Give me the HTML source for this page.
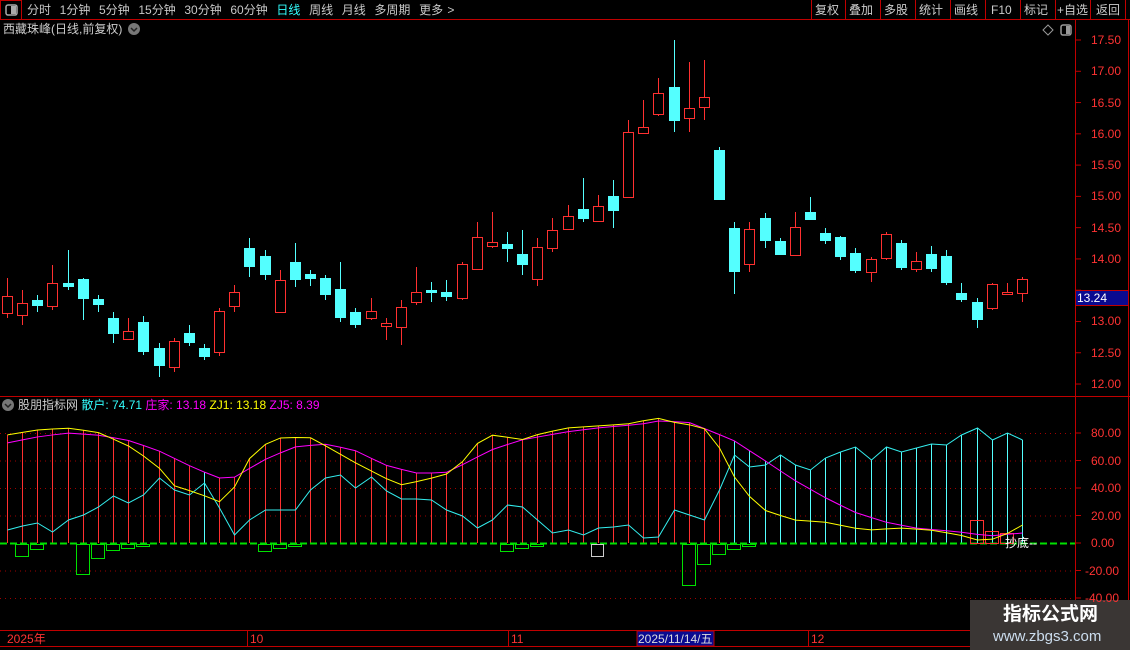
<!DOCTYPE html>
<html><head><meta charset="utf-8">
<style>
html,body{margin:0;padding:0;background:#000;}
body{width:1130px;height:650px;position:relative;overflow:hidden;font-family:"Liberation Sans","Noto Sans CJK SC",sans-serif;}
.t{position:absolute;font-size:12px;white-space:nowrap;line-height:14px;}
svg{position:absolute;left:0;top:0;}
</style></head><body>
<svg id="s" width="1130" height="650" xmlns="http://www.w3.org/2000/svg">
<g fill="none" stroke="#c00000" stroke-width="1">
<line x1="0" y1="19.5" x2="1130" y2="19.5"/>
<rect x="0.5" y="0.5" width="21" height="19"/>
<line x1="1075.5" y1="20" x2="1075.5" y2="630"/>
<line x1="1128.5" y1="20" x2="1128.5" y2="650"/>
<line x1="0" y1="396.5" x2="1130" y2="396.5"/>
<line x1="0" y1="630.5" x2="1075" y2="630.5"/>
<line x1="0" y1="646.5" x2="1130" y2="646.5"/>
<line x1="1075" y1="600.5" x2="1130" y2="600.5"/>
<line x1="247.5" y1="630" x2="247.5" y2="646"/>
<line x1="508.5" y1="630" x2="508.5" y2="646"/>
<line x1="808.5" y1="630" x2="808.5" y2="646"/>
<line x1="811.5" y1="0" x2="811.5" y2="19"/><line x1="845.5" y1="0" x2="845.5" y2="19"/><line x1="880.5" y1="0" x2="880.5" y2="19"/><line x1="915.5" y1="0" x2="915.5" y2="19"/><line x1="950.5" y1="0" x2="950.5" y2="19"/><line x1="985.5" y1="0" x2="985.5" y2="19"/><line x1="1020.5" y1="0" x2="1020.5" y2="19"/><line x1="1055.5" y1="0" x2="1055.5" y2="19"/><line x1="1090.5" y1="0" x2="1090.5" y2="19"/><line x1="1125.5" y1="0" x2="1125.5" y2="19"/>
</g>
<rect x="6" y="5" width="11" height="10" rx="2" fill="none" stroke="#aaa" stroke-width="1.5"/><rect x="11" y="6" width="5" height="8" fill="#aaa"/>
<rect x="1061" y="25" width="10" height="10" rx="2" fill="none" stroke="#999" stroke-width="1.5"/><rect x="1066" y="26" width="4" height="8" fill="#999"/>
<path d="M1048 25 L1053 30 L1048 35 L1043 30 Z" fill="none" stroke="#999"/>
<circle cx="134" cy="29" r="6" fill="#777"/><path d="M131 28 L134 31 L137 28" stroke="#222" stroke-width="1.5" fill="none"/>
<circle cx="8" cy="405" r="6" fill="#777"/><path d="M5 404 L8 407 L11 404" stroke="#222" stroke-width="1.5" fill="none"/>
<g id="grid"></g><g id="ind"></g><g id="cand"></g>
<rect x="637" y="631" width="77" height="15" fill="#0a0a90" stroke="#c00000"/>
<rect x="1075.5" y="290.5" width="53" height="15" fill="#0a0a90" stroke="#c00000"/>
<rect x="970" y="600" width="160" height="50" fill="#3a3634"/>
</svg>
<div class="t" style="left:27px;top:3px;color:#c8c8c8;word-spacing:1px">分时&nbsp; 1分钟&nbsp; 5分钟&nbsp; 15分钟&nbsp; 30分钟&nbsp; 60分钟&nbsp; <span style="color:#3ff">日线</span>&nbsp; 周线&nbsp; 月线&nbsp; 多周期&nbsp; 更多 &gt;</div>
<div class="t" style="left:815px;top:3px;color:#ccc">复权</div>
<div class="t" style="left:849px;top:3px;color:#ccc">叠加</div>
<div class="t" style="left:884px;top:3px;color:#ccc">多股</div>
<div class="t" style="left:919px;top:3px;color:#ccc">统计</div>
<div class="t" style="left:954px;top:3px;color:#ccc">画线</div>
<div class="t" style="left:991px;top:3px;color:#ccc">F10</div>
<div class="t" style="left:1024px;top:3px;color:#ccc">标记</div>
<div class="t" style="left:1057px;top:3px;color:#ccc">+自选</div>
<div class="t" style="left:1096px;top:3px;color:#ccc">返回</div>
<div class="t" style="left:3px;top:22px;color:#ccc">西藏珠峰(日线,前复权)</div>
<div class="t" style="left:18px;top:398px;color:#ccc">股朋指标网 <span style="color:#3ff">散户: 74.71</span> <span style="color:#f0f">庄家: 13.18</span> <span style="color:#ff0">ZJ1: 13.18</span> <span style="color:#f0f">ZJ5: 8.39</span></div>
<div class="t" style="left:1005px;top:536px;color:#fff">抄底--</div>
<div class="t" style="left:7px;top:632px;color:#f33">2025年</div>
<div class="t" style="left:250px;top:632px;color:#f33">10</div>
<div class="t" style="left:511px;top:632px;color:#f33">11</div>
<div class="t" style="left:811px;top:632px;color:#f33">12</div>
<div class="t" style="left:638px;top:632px;color:#ddd">2025/11/14/五</div>
<div class="t" style="left:1077px;top:291px;color:#fff">13.24</div>
<div class="t" style="left:1003px;top:604px;color:#fff;font-size:19px;line-height:22px;font-weight:bold">指标公式网</div>
<div class="t" style="left:993px;top:628px;color:#cde;font-size:15px;line-height:18px">www.zbgs3.com</div>
<div id="ax"></div>
<script>
var NS="http://www.w3.org/2000/svg";
function el(g,t,a){var e=document.createElementNS(NS,t);for(var k in a)e.setAttribute(k,a[k]);document.getElementById(g).appendChild(e);return e;}
var ax=document.getElementById('ax'),h='';
[17.5,17,16.5,16,15.5,15,14.5,14,13.5,13,12.5,12].forEach(function(p){var y=40+(17.5-p)*62.55;
if(Math.abs(y-298)>8)h+='<div class="t" style="left:1091px;top:'+(y-7)+'px;color:#f33">'+p.toFixed(2)+'</div>';
el('grid','line',{x1:1075,x2:1081,y1:y,y2:y,stroke:'#c00000'});});
[80,60,40,20,0,-20,-40].forEach(function(v){var y=543-v*1.375;
h+='<div class="t" style="left:'+(v<0?1085:1091)+'px;top:'+(y-7)+'px;color:#f33">'+v.toFixed(2)+'</div>';
el('grid','line',{x1:1075,x2:1081,y1:y,y2:y,stroke:'#c00000'});
if(v!=0)el('grid','line',{x1:0,x2:1075,y1:y+.5,y2:y+.5,stroke:'#a00000','stroke-dasharray':'1 4'});});
ax.innerHTML=h;
var C=[[296,313,278,318,1],[303,315,290,325,1],[300,306,295,312,0],[283,306,265,310,1],[283,287,250,290,0],[279,299,278,320,0],[299,305,295,312,0],[318,334,312,343,0],[331,339,318,340,1],[322,352,316,355,0],[348,366,343,377,0],[341,367,338,372,1],[333,343,325,346,0],[348,357,344,360,0],[311,352,308,356,1],[292,306,285,312,1],[248,267,238,277,0],[256,275,250,280,0],[280,312,270,312,1],[262,280,243,287,0],[274,279,270,286,0],[278,295,275,300,0],[289,318,262,322,0],[312,325,308,328,0],[311,318,298,320,1],[323,326,318,340,1],[307,327,300,345,1],[292,302,267,305,1],[290,293,282,302,0],[292,297,280,301,0],[264,298,262,300,1],[237,269,222,270,1],[242,246,212,248,1],[244,249,232,262,0],[254,265,230,275,0],[247,279,238,286,1],[230,248,218,252,1],[216,229,205,230,1],[209,219,178,222,0],[206,221,195,222,1],[196,211,180,228,0],[132,197,120,198,1],[127,133,100,134,1],[93,114,78,116,1],[87,121,40,132,0],[108,118,62,132,1],[97,107,60,120,1],[150,200,147,200,0],[228,272,222,294,0],[229,264,222,272,1],[218,241,213,248,0],[241,255,238,255,0],[227,255,212,256,1],[212,220,197,220,0],[233,241,228,244,0],[237,257,236,260,0],[253,271,248,273,0],[259,272,257,282,1],[234,258,232,260,1],[243,268,240,270,0],[261,269,252,272,1],[254,269,246,272,0],[256,283,250,285,0],[293,300,283,302,0],[302,320,298,328,0],[284,308,283,310,1],[292,294,283,294,1],[279,293,277,302,1]];
function X(i){return Math.round(7+i*15.15);}
C.forEach(function(c,i){var x=X(i)+.5,col=c[4]?'#ff3030':'#54ffff';
if(c[4]){el('cand','line',{x1:x,x2:x,y1:c[2],y2:c[0],stroke:col});el('cand','line',{x1:x,x2:x,y1:c[1],y2:c[3],stroke:col});
el('cand','rect',{x:x-5,y:c[0]+.5,width:10,height:Math.max(c[1]-c[0],1),fill:'none',stroke:col});}
else{el('cand','line',{x1:x,x2:x,y1:c[2],y2:c[3],stroke:col});el('cand','rect',{x:x-5.5,y:c[0],width:11,height:Math.max(c[1]-c[0],1),fill:col});}});
function interp(pts,x){for(var k=0;k<pts.length-1;k++){if(x<=pts[k+1][0]){var a=pts[k],b=pts[k+1];return a[1]+(b[1]-a[1])*(x-a[0])/(b[0]-a[0]);}}return pts[pts.length-1][1];}
var Yp=[[7,435],[37,430],[67,428],[97,432],[127,445],[157,465],[172,485],[203,495],[218,503],[233,490],[248,460],[264,445],[279,438],[309,437],[324,445],[354,462],[385,478],[400,485],[415,482],[445,475],[460,465],[475,445],[491,435],[506,437],[521,440],[536,435],[566,428],[597,426],[627,424],[657,418],[672,422],[703,427],[718,445],[733,475],[748,495],[764,510],[794,520],[824,522],[854,528],[869,530],[900,528],[930,530],[960,535],[975,540],[990,540],[1005,535],[1021,525]];
var Mp=[[7,443],[37,437],[67,433],[97,435],[127,440],[157,450],[188,465],[218,478],[233,478],[264,460],[294,447],[324,444],[354,450],[385,465],[415,473],[445,473],[460,466],[491,450],[521,440],[566,432],[597,428],[642,424],[657,421],[688,422],[703,428],[733,440],[764,460],[794,480],[824,497],[854,512],[885,522],[915,528],[960,532],[990,536],[1021,533]];
var Cy=[530,526,523,532,520,515,507,496,503,495,478,490,495,483,508,535,520,510,510,510,490,478,475,488,477,491,499,499,500,510,516,528,520,505,507,520,533,530,535,528,527,525,538,537,510,515,520,490,455,467,465,455,465,470,458,452,447,460,447,452,448,444,445,435,428,440,433,440];
var py='',pm='',pc='';
for(var i=0;i<68;i++){var x=X(i)+.5,y1=interp(Yp,x),m1=interp(Mp,x),c1=Cy[i];
py+=(i?'L':'M')+x+' '+y1;pm+=(i?'L':'M')+x+' '+m1;pc+=(i?'L':'M')+x+' '+c1;
var tp=Math.min(y1,m1,c1);var col=(c1<y1-3)?'#54ffff':'#ff3030';
el('ind','line',{x1:x,x2:x,y1:543,y2:tp,stroke:col});}
el('ind','line',{x1:0,x2:1075,y1:543.5,y2:543.5,stroke:'#00e000','stroke-width':2,'stroke-dasharray':'7 3'});
[[22,12],[37,5],[82,30],[97,14],[112,6],[127,4],[142,2],[264,7],[279,4],[294,2],[506,7],[521,4],[536,2],[688,41],[703,20],[718,10],[733,5],[748,2]].forEach(function(b){var i=Math.round((b[0]-7)/15.15),x=X(i);
el('ind','rect',{x:x-6.5,y:544.5,width:13,height:b[1],fill:'none',stroke:'#00e000'});});
el('ind','rect',{x:591.5,y:544.5,width:12,height:12,fill:'none',stroke:'#ccc'});
[[975,520],[990,531],[1005,533]].forEach(function(b){var i=Math.round((b[0]-7)/15.15),x=X(i);
el('ind','rect',{x:x-6.5,y:b[1]+.5,width:13,height:543-b[1],fill:'none',stroke:'#ff3030'});});
el('ind','path',{d:pc,fill:'none',stroke:'#3ee'});
el('ind','path',{d:pm,fill:'none',stroke:'#f0f'});
el('ind','path',{d:py,fill:'none',stroke:'#ff0'});
</script>
</body></html>
